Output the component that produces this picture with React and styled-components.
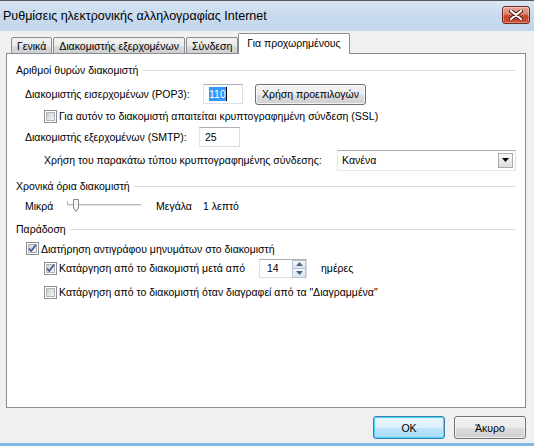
import styled, { createGlobalStyle } from "styled-components";

const GlobalStyle = createGlobalStyle`
  html, body {
    margin: 0;
    padding: 0;
    background: #f0f0f0;
  }
  body {
    font-family: "Liberation Sans", "DejaVu Sans", Arial, sans-serif;
    font-size: 10.5px;
    color: #000;
  }
`;

const tabs = [
  { id: 1, name: "Γενικά" },
  { id: 2, name: "Διακομιστής εξερχομένων" },
  { id: 3, name: "Σύνδεση" },
  { id: 4, name: "Για προχωρημένους", active: true },
];

const CheckBox = ({ checked }) => (
  <svg width="13" height="13" viewBox="0 0 13 13">
    <defs>
      <linearGradient id="cbg" x1="0" y1="0" x2="1" y2="1">
        <stop offset="0" stopColor="#cbcfd5" />
        <stop offset="1" stopColor="#f7f7f7" />
      </linearGradient>
    </defs>
    <rect x="0.5" y="0.5" width="12" height="12" fill="#fff" stroke="#8e8f8f" />
    <rect x="2.5" y="2.5" width="8" height="8" fill="url(#cbg)" stroke="#aeb3b9" />
    {checked && (
      <path
        d="M3 6.5 L5.2 9 L10 2.8"
        fill="none"
        stroke="#4a5c8c"
        strokeWidth="1.8"
        strokeLinejoin="round"
      />
    )}
  </svg>
);

const App = () => {
  return (
    <Window>
      <GlobalStyle />
      <TitleBar>
        <Title>Ρυθμίσεις ηλεκτρονικής αλληλογραφίας Internet</Title>
        <CloseButton>
          <svg width="14" height="10" viewBox="0 0 14 10">
            <path d="M2 1 L12 9 M12 1 L2 9" stroke="#4b1a14" strokeWidth="4" strokeLinecap="round" />
            <path d="M2 1 L12 9 M12 1 L2 9" stroke="#fff" strokeWidth="2.2" strokeLinecap="round" />
          </svg>
        </CloseButton>
      </TitleBar>

      <Body>
        <TabStrip>
          {tabs.map(({ id, name, active }) => (
            <Tab key={id} $active={active}>
              {name}
            </Tab>
          ))}
        </TabStrip>

        <Panel>
          <GroupHeader $mt={8}>
            <span>Αριθμοί θυρών διακομιστή</span>
          </GroupHeader>

          <Row $h={22} $mt={5} $indent={9}>
            <Label $w={178}>Διακομιστής εισερχομένων (POP3):</Label>
            <TextBox $w={40}>
              <Selected>110</Selected>
              <Caret />
            </TextBox>
            <PushButton>Χρήση προεπιλογών</PushButton>
          </Row>

          <Row $h={22} $indent={28}>
            <CheckBox />
            <CheckText>Για αυτόν το διακομιστή απαιτείται κρυπτογραφημένη σύνδεση (SSL)</CheckText>
          </Row>

          <Row $h={20} $indent={9}>
            <Label $w={174}>Διακομιστής εξερχομένων (SMTP):</Label>
            <TextBox $w={41}>25</TextBox>
          </Row>

          <Row $h={22} $mt={2} $indent={28}>
            <Label $w={293}>Χρήση του παρακάτω τύπου κρυπτογραφημένης σύνδεσης:</Label>
            <Select>
              <span>Κανένα</span>
              <DropArrow>
                <svg width="7" height="4" viewBox="0 0 7 4">
                  <path d="M0 0 H7 L3.5 4 Z" fill="#000" />
                </svg>
              </DropArrow>
            </Select>
          </Row>

          <GroupHeader $mt={7}>
            <span>Χρονικά όρια διακομιστή</span>
          </GroupHeader>

          <Row $h={20} $mt={2} $indent={9}>
            <Label $w={42}>Μικρά</Label>
            <svg width="74" height="14" viewBox="0 0 74 14">
              <rect x="0" y="5" width="74" height="1" fill="#b7b7b7" />
              <rect x="0" y="6" width="74" height="1" fill="#e6e6e6" />
              <rect x="0" y="2" width="1" height="4" fill="#b7b7b7" />
              <path
                d="M6.5 0.5 H11.5 V9 L9 12.5 L6.5 9 Z"
                fill="#f4f4f4"
                stroke="#8a8a8a"
              />
            </svg>
            <Label $w={47} $ml={15}>Μεγάλα</Label>
            <Label>1 λεπτό</Label>
          </Row>

          <GroupHeader $mt={5}>
            <span>Παράδοση</span>
          </GroupHeader>

          <Row $h={19} $mt={2} $indent={10}>
            <CheckBox checked />
            <CheckText>Διατήρηση αντιγράφου μηνυμάτων στο διακομιστή</CheckText>
          </Row>

          <Row $h={20} $indent={28}>
            <CheckBox checked />
            <CheckText $w={202}>Κατάργηση από το διακομιστή μετά από</CheckText>
            <Spinner>
              <span>14</span>
              <SpinButtons>
                <SpinButton>
                  <svg width="7" height="4" viewBox="0 0 7 4">
                    <path d="M0 4 H7 L3.5 0 Z" fill="#4d6185" />
                  </svg>
                </SpinButton>
                <SpinButton>
                  <svg width="7" height="4" viewBox="0 0 7 4">
                    <path d="M0 0 H7 L3.5 4 Z" fill="#4d6185" />
                  </svg>
                </SpinButton>
              </SpinButtons>
            </Spinner>
            <Label $ml={14}>ημέρες</Label>
          </Row>

          <Row $h={20} $mt={4} $indent={28}>
            <CheckBox />
            <CheckText>Κατάργηση από το διακομιστή όταν διαγραφεί από τα "Διαγραμμένα"</CheckText>
          </Row>
        </Panel>

        <Footer>
          <DialogButton $default>OK</DialogButton>
          <DialogButton>Άκυρο</DialogButton>
        </Footer>
      </Body>
    </Window>
  );
};

export default App;

const Window = styled.div`
  width: 534px;
  height: 446px;
  display: flex;
  flex-direction: column;
  box-sizing: border-box;
  border-top: 1px solid #555a60;
  border-bottom: 3px solid #80b9e6;
  overflow: hidden;
`;

const TitleBar = styled.header`
  height: 30px;
  flex: none;
  display: flex;
  align-items: center;
  justify-content: space-between;
  padding: 0 4px 0 3px;
  background: linear-gradient(to bottom, #d9e6f3 0%, #c9dbee 45%, #c2d6ec 100%);
`;

const Title = styled.h1`
  margin: 0;
  font-family: "Liberation Sans", "DejaVu Sans", sans-serif;
  font-weight: normal;
  font-size: 12.5px;
  color: #000;
  padding-bottom: 1px;
`;

const CloseButton = styled.button`
  width: 28px;
  height: 18px;
  margin-top: -3px;
  padding: 0;
  display: grid;
  place-items: center;
  border: 1px solid #6b2a22;
  border-radius: 3px;
  background: linear-gradient(to bottom, #e8aa9a 0%, #d7826e 45%, #c7452f 55%, #c84c36 100%);
  box-shadow: inset 0 0 0 1px rgba(255, 255, 255, 0.35);
`;

const Body = styled.main`
  flex: 1;
  display: flex;
  flex-direction: column;
  padding: 3px 8px 0 6px;
  background: #f0f0f0;
`;

const TabStrip = styled.nav`
  display: flex;
  align-items: flex-end;
  padding-left: 5px;
  height: 20px;
  position: relative;
  z-index: 1;
  margin-bottom: -1px;
`;

const Tab = styled.div`
  box-sizing: border-box;
  height: ${(p) => (p.$active ? "21px" : "17px")};
  padding: ${(p) => (p.$active ? "2px 8px 0" : "1px 5px 0")};
  margin-left: ${(p) => (p.$active ? "-1px" : "0")};
  margin-right: 1px;
  border: 1px solid #898c95;
  border-bottom: ${(p) => (p.$active ? "none" : "1px solid #898c95")};
  border-radius: 2px 2px 0 0;
  background: ${(p) =>
    p.$active ? "#fff" : "linear-gradient(to bottom, #f2f2f2 0%, #ebebeb 50%, #dddddd 51%, #cfcfcf 100%)"};
  white-space: nowrap;
  line-height: 14px;
`;

const Panel = styled.section`
  box-sizing: border-box;
  height: 355px;
  background: #fff;
  border: 1px solid #898c95;
  display: flex;
  flex-direction: column;
  padding: 0 9px 0 9px;
`;

const GroupHeader = styled.div`
  margin-top: ${(p) => p.$mt || 0}px;
  height: 16px;
  display: flex;
  align-items: center;
  gap: 4px;

  &::after {
    content: "";
    flex: 1;
    height: 1px;
    background: #d5dfe5;
  }
`;

const Row = styled.div`
  height: ${(p) => p.$h}px;
  margin-top: ${(p) => p.$mt || 0}px;
  padding-left: ${(p) => p.$indent || 0}px;
  display: flex;
  align-items: center;
  flex: none;
`;

const Label = styled.span`
  width: ${(p) => (p.$w ? `${p.$w}px` : "auto")};
  margin-left: ${(p) => p.$ml || 0}px;
  flex: none;
  white-space: nowrap;
`;

const CheckText = styled.span`
  margin-left: 2px;
  width: ${(p) => (p.$w ? `${p.$w - 2}px` : "auto")};
  flex: none;
  white-space: nowrap;
`;

const TextBox = styled.div`
  box-sizing: border-box;
  width: ${(p) => p.$w}px;
  height: 20px;
  display: flex;
  align-items: center;
  padding-left: 5px;
  border: 1px solid #dbdfe6;
  border-top-color: #abadb3;
  border-left-color: #e2e3ea;
  background: #fff;
`;

const Selected = styled.span`
  background: #3399ff;
  color: #fff;
  line-height: 14px;
`;

const Caret = styled.span`
  width: 1px;
  height: 14px;
  background: #000;
`;

const PushButton = styled.button`
  margin-left: 12px;
  height: 21px;
  width: 111px;
  padding: 0;
  font: inherit;
  color: #000;
  border: 1px solid #707070;
  border-radius: 3px;
  background: linear-gradient(to bottom, #f2f2f2 0%, #ebebeb 50%, #dddddd 51%, #cfcfcf 100%);
  box-shadow: inset 0 0 0 1px rgba(255, 255, 255, 0.7);
`;

const Select = styled.div`
  box-sizing: border-box;
  width: 180px;
  height: 21px;
  display: flex;
  align-items: center;
  justify-content: space-between;
  padding: 0 2px 0 4px;
  border: 1px solid #abadb3;
  border-color: #abadb3 #dbdfe6 #e3e9ef #e2e3ea;
  background: #fff;
`;

const DropArrow = styled.div`
  box-sizing: border-box;
  width: 15px;
  height: 15px;
  display: grid;
  place-items: center;
  border: 1px solid #a9a9a9;
  background: linear-gradient(to bottom, #f7f7f7, #dedede);
`;

const Spinner = styled.div`
  box-sizing: border-box;
  width: 48px;
  height: 19px;
  display: flex;
  align-items: center;
  justify-content: space-between;
  padding-left: 7px;
  border: 1px solid #dbdfe6;
  border-top-color: #abadb3;
  background: #fff;
`;

const SpinButtons = styled.div`
  display: flex;
  flex-direction: column;
  height: 100%;
  width: 14px;
`;

const SpinButton = styled.div`
  flex: 1;
  display: grid;
  place-items: center;
  border: 1px solid #b4c3d6;
  margin: 0 0 -1px 0;
  background: linear-gradient(to bottom, #f4f8fc, #dae5f1);
`;

const Footer = styled.footer`
  flex: 1;
  display: flex;
  justify-content: flex-end;
  align-items: flex-start;
  gap: 9px;
  padding-top: 8px;
`;

const DialogButton = styled.button`
  width: 72px;
  height: 23px;
  padding: 0;
  font: inherit;
  color: #000;
  border: 1px solid ${(p) => (p.$default ? "#3c7fb1" : "#707070")};
  border-radius: 3px;
  background: ${(p) =>
    p.$default
      ? "linear-gradient(to bottom, #eaf6fd 0%, #d9f0fc 50%, #bee6fd 51%, #a7d9f5 100%)"
      : "linear-gradient(to bottom, #f2f2f2 0%, #ebebeb 50%, #dddddd 51%, #cfcfcf 100%)"};
  box-shadow: inset 0 0 0 1px ${(p) => (p.$default ? "#48d3fb" : "rgba(255, 255, 255, 0.7)")};
`;
